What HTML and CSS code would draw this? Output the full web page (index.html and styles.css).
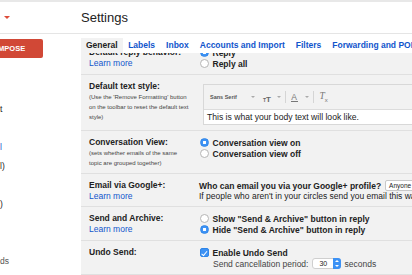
FILE: index.html
```html
<!DOCTYPE html>
<html lang="en">

<head>
    <meta charset="UTF-8">
    <meta name="viewport" content="width=device-width, initial-scale=1.0">
    <title>Settings - Mail</title>
    <link rel="stylesheet" href="styles.css">
</head>

<body>

    <div class="topbar"></div>
    <header class="header">
        <div class="header-left"><span class="caret"></span></div>
        <h1 class="title">Settings</h1>
    </header>

    <div class="main">
        <aside class="sidebar">
            <button class="compose">COMPOSE</button>
            <ul class="nav">
                <li>&nbsp;</li>
                <li>&nbsp;</li>
                <li>t</li>
                <li>&nbsp;</li>
                <li class="blue">l</li>
                <li>l)</li>
                <li>&nbsp;</li>
                <li>)</li>
                <li>&nbsp;</li>
                <li>&nbsp;</li>
                <li class="grey">ds</li>
            </ul>
        </aside>

        <section class="settings">
            <nav class="tabs">
                <a class="tab active">General</a>
                <a class="tab">Labels</a>
                <a class="tab">Inbox</a>
                <a class="tab">Accounts and Import</a>
                <a class="tab">Filters</a>
                <a class="tab">Forwarding and POP/IMAP</a>
            </nav>

            <div class="panel">
                <div class="row first">
                    <div class="label">
                        <div class="name">Default reply behavior:</div>
                        <a class="learn">Learn more</a>
                    </div>
                    <div class="value">
                        <label class="option"><input type="radio" name="reply" checked>Reply</label>
                        <label class="option"><input type="radio" name="reply">Reply all</label>
                    </div>
                </div>

                <div class="row">
                    <div class="label">
                        <div class="name">Default text style:</div>
                        <div class="hint">(Use the 'Remove Formatting' button<br>on the toolbar to reset the default text<br>style)</div>
                    </div>
                    <div class="value">
                        <div class="editor">
                            <div class="toolbar">
                                <span class="font-name">Sans Serif</span>
                                <span class="arrow arrow-font"></span>
                                <span class="size-icon"><span class="t-small">T</span><span class="t-big">T</span></span>
                                <span class="arrow"></span>
                                <span class="sep"></span>
                                <span class="color-icon">A</span>
                                <span class="arrow arrow-color"></span>
                                <span class="sep"></span>
                                <span class="clear-icon">T<sub>x</sub></span>
                            </div>
                            <div class="sample">This is what your body text will look like.</div>
                        </div>
                    </div>
                </div>

                <div class="row">
                    <div class="label">
                        <div class="name">Conversation View:</div>
                        <div class="hint">(sets whether emails of the same<br>topic are grouped together)</div>
                    </div>
                    <div class="value">
                        <label class="option"><input type="radio" name="conv" checked>Conversation view on</label>
                        <label class="option"><input type="radio" name="conv">Conversation view off</label>
                    </div>
                </div>

                <div class="row">
                    <div class="label">
                        <div class="name">Email via Google+:</div>
                        <a class="learn">Learn more</a>
                    </div>
                    <div class="value">
                        <div class="question">Who can email you via your Google+ profile?<span class="select">Anyone on Google+</span></div>
                        <div class="plain">If people who aren't in your circles send you email this way, where will it go?</div>
                    </div>
                </div>

                <div class="row">
                    <div class="label">
                        <div class="name">Send and Archive:</div>
                        <a class="learn">Learn more</a>
                    </div>
                    <div class="value">
                        <label class="option"><input type="radio" name="archive">Show "Send &amp; Archive" button in reply</label>
                        <label class="option"><input type="radio" name="archive" checked>Hide "Send &amp; Archive" button in reply</label>
                    </div>
                </div>

                <div class="row">
                    <div class="label">
                        <div class="name">Undo Send:</div>
                    </div>
                    <div class="value">
                        <label class="option"><input type="checkbox" checked>Enable Undo Send</label>
                        <div class="period">Send cancellation period:<span class="number">30<span class="stepper"></span></span>seconds</div>
                    </div>
                </div>
            </div>
        </section>
    </div>

</body>

</html>
```

FILE: styles.css
```css
body {
    font-family: "Liberation Sans", Arial, sans-serif;
    margin: 0;
    padding: 0;
    width: 412px;
    height: 275px;
    overflow: hidden;
    background-color: #fff;
    color: #222;
}

.topbar {
    height: 2px;
    background-color: #e8e8e8;
}

.header {
    display: flex;
    align-items: center;
    height: 31px;
    border-bottom: 1px solid #e5e5e5;
}

.header-left {
    width: 81px;
    padding-left: 4px;
    box-sizing: border-box;
}

.caret {
    display: block;
    width: 0;
    height: 0;
    border-left: 3px solid transparent;
    border-right: 3px solid transparent;
    border-top: 3px solid #dd4b39;
}

.title {
    margin: 0;
    font-size: 13px;
    font-weight: normal;
    color: #222;
}

.main {
    display: flex;
}

.sidebar {
    width: 81px;
    flex-shrink: 0;
    overflow: hidden;
}

.compose {
    display: block;
    width: 74px;
    height: 19px;
    margin: 5px 0 0 -31px;
    padding: 0;
    border: none;
    border-radius: 2px;
    background-color: #d14836;
    color: #fff;
    font-family: inherit;
    font-size: 7.5px;
    font-weight: bold;
}

.nav {
    list-style: none;
    margin: 0;
    padding: 4px 0 0;
}

.nav li {
    height: 19px;
    line-height: 19px;
    font-size: 8.5px;
    color: #222;
}

.nav .blue {
    color: #15c;
}

.nav .grey {
    color: #555;
}

.settings {
    flex: 1;
    min-width: 0;
    overflow: hidden;
}

.tabs {
    display: flex;
    padding-top: 4px;
    white-space: nowrap;
}

.tab {
    height: 15px;
    line-height: 15px;
    padding: 0 5.5px;
    font-size: 8.5px;
    font-weight: bold;
    color: #15c;
}

.tab.active {
    padding: 0 5px;
    color: #222;
    background-color: #f2f2f2;
}

.panel {
    height: 222px;
    overflow: hidden;
    background-color: #f2f2f2;
}

.row {
    display: grid;
    grid-template-columns: 118px 1fr;
    padding: 6px 0 5px;
    border-bottom: 1px solid #e0e0e0;
}

.row.first {
    margin-top: -12px;
}

.label {
    padding-left: 8px;
}

.name {
    height: 11px;
    line-height: 11px;
    font-size: 8.5px;
    font-weight: bold;
    white-space: nowrap;
}

.learn {
    display: block;
    height: 10px;
    line-height: 10px;
    font-size: 8.5px;
    color: #15c;
}

.hint {
    font-size: 6px;
    line-height: 10px;
    color: #444;
    white-space: nowrap;
}

.value {
    min-width: 0;
    white-space: nowrap;
}

.option {
    display: flex;
    align-items: center;
    height: 11px;
    font-size: 8.5px;
    font-weight: bold;
}

.option input {
    appearance: none;
    -webkit-appearance: none;
    width: 9px;
    height: 9px;
    margin: 0 4px 0 0.5px;
    border: 1px solid #b5b5b5;
    border-radius: 50%;
    background-color: #fff;
    box-sizing: border-box;
    flex-shrink: 0;
}

.option input:checked {
    border-color: #2f86e8;
    background: radial-gradient(circle, #fff 0 1.4px, #3d92f5 1.9px);
}

.option input[type="checkbox"] {
    position: relative;
    border-radius: 2px;
}

.option input[type="checkbox"]:checked {
    background: #3d92f5;
}

.option input[type="checkbox"]:checked::after {
    content: "";
    position: absolute;
    left: 2.5px;
    top: 0.5px;
    width: 2px;
    height: 4.5px;
    border: solid #fff;
    border-width: 0 1.2px 1.2px 0;
    transform: rotate(40deg);
}

.editor {
    width: 260px;
    margin: 3px 0 0 4px;
    border: 1px solid #d8d8d8;
}

.toolbar {
    display: flex;
    align-items: center;
    height: 24px;
    padding-left: 6px;
    color: #666;
}

.font-name {
    font-size: 5.5px;
    font-weight: bold;
    color: #555;
}

.arrow {
    width: 0;
    height: 0;
    margin: 0 4px 0 6px;
    border-left: 2px solid transparent;
    border-right: 2px solid transparent;
    border-top: 2px solid #aaa;
}

.arrow-font {
    margin-left: 14px;
    margin-right: 8px;
}

.arrow-color {
    margin-left: 7px;
}

.size-icon {
    font-weight: bold;
    color: #666;
}

.t-small {
    font-size: 5px;
}

.t-big {
    font-size: 8px;
}

.sep {
    width: 1px;
    height: 12px;
    margin: 0 5px 0 0;
    background-color: #d5d5d5;
}

.color-icon {
    font-size: 8.5px;
    color: #777;
    border-bottom: 1.5px solid #777;
    line-height: 8px;
    padding: 0 0.5px;
}

.clear-icon {
    margin-left: 1px;
    font-family: "Liberation Serif", serif;
    font-style: italic;
    font-size: 9.5px;
    color: #777;
}

.clear-icon sub {
    font-size: 6px;
    font-style: normal;
    font-family: "Liberation Sans", sans-serif;
}

.sample {
    height: 14px;
    line-height: 14px;
    padding-left: 3px;
    border-top: 1px solid #dcdcdc;
    background-color: #fff;
    font-size: 8.6px;
}

.question {
    display: flex;
    align-items: center;
    height: 11px;
    font-size: 8.5px;
    font-weight: bold;
}

.select {
    height: 9px;
    line-height: 9px;
    margin-left: 4px;
    padding: 0 3px;
    border: 1px solid #c8c8c8;
    border-radius: 2px;
    background-color: #fff;
    font-size: 6.5px;
    font-weight: normal;
}

.plain {
    height: 10px;
    line-height: 10px;
    font-size: 8.5px;
    color: #222;
}

.period {
    display: flex;
    align-items: center;
    height: 11px;
    padding-left: 14px;
    font-size: 8.5px;
    color: #444;
}

.number {
    display: flex;
    align-items: center;
    justify-content: space-between;
    width: 29px;
    height: 11px;
    margin: 0 3px 0 4px;
    padding-left: 6px;
    box-sizing: border-box;
    border: 1px solid #cfcfcf;
    border-radius: 3px;
    background-color: #fff;
    font-size: 7px;
    color: #222;
}

.stepper {
    position: relative;
    width: 8px;
    height: 11px;
    margin-right: -1px;
    border-radius: 0 3px 3px 0;
    background-color: #3d92f5;
}

.stepper::before,
.stepper::after {
    content: "";
    position: absolute;
    left: 2px;
    width: 0;
    height: 0;
    border-left: 2px solid transparent;
    border-right: 2px solid transparent;
}

.stepper::before {
    top: 2px;
    border-bottom: 2px solid #fff;
}

.stepper::after {
    bottom: 2px;
    border-top: 2px solid #fff;
}
```
